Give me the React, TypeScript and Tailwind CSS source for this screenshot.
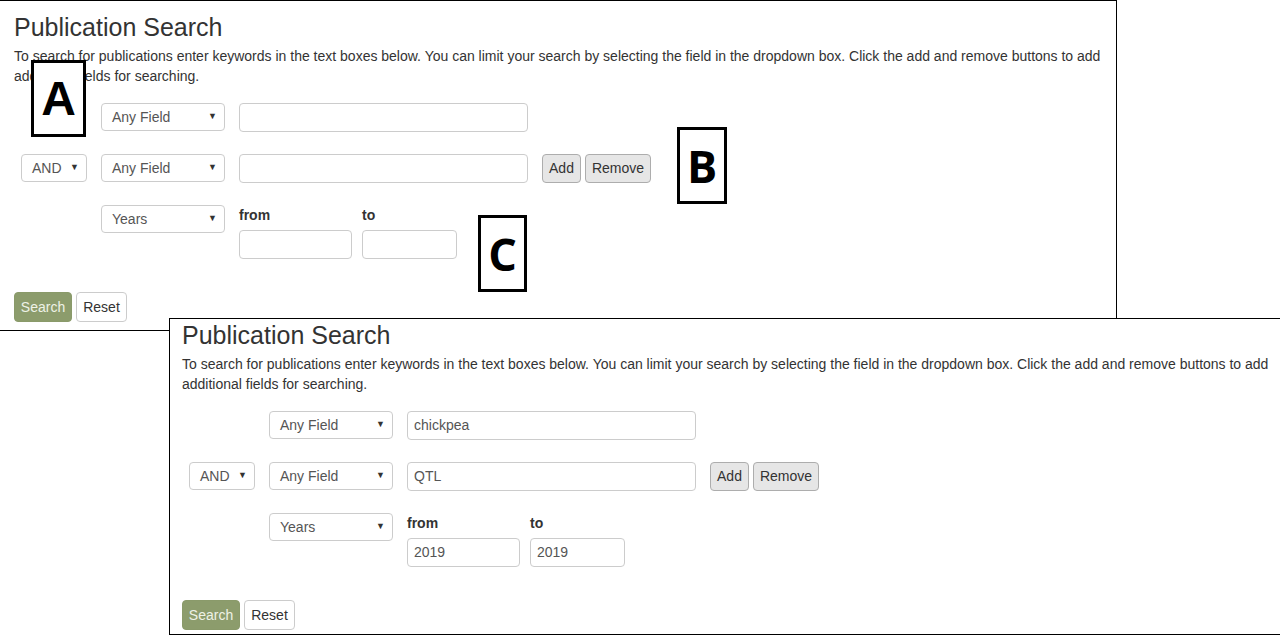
import React from 'react';

const font = { fontFamily: '"Liberation Sans", Arial, sans-serif' };

function Select({ label, className }: { label: string; className: string }) {
  return (
    <div className={`flex h-[28px] items-center justify-between rounded-[4px] border border-[#ccc] bg-white pl-[10px] pr-[7px] text-[14px] text-[#555] ${className}`}>
      <span>{label}</span>
      <span className="text-[9px] text-[#333]">▼</span>
    </div>
  );
}

function TextBox({ value, className }: { value?: string; className: string }) {
  return (
    <div className={`flex h-[29px] items-center rounded-[4px] border border-[#ccc] bg-white px-[6px] text-[14px] text-[#555] ${className}`}>
      {value}
    </div>
  );
}

function SearchForm({ term1, term2, from, to }: { term1?: string; term2?: string; from?: string; to?: string }) {
  return (
    <div className="w-[1088px] text-[#333]" style={font}>
      <h3 className="text-[25px] leading-[28px] font-normal">Publication Search</h3>
      <p className="mt-[5px] text-[14px] leading-5">
        To search for publications enter keywords in the text boxes below. You can limit your search by selecting the field in the dropdown box. Click the add and remove buttons to add additional fields for searching.
      </p>

      <div className="mt-[17px] flex items-start">
        <div className="w-[87px]" />
        <Select label="Any Field" className="w-[124px]" />
        <TextBox value={term1} className="ml-[14px] w-[289px]" />
      </div>

      <div className="mt-[22px] flex items-start">
        <div className="w-[87px] pl-[7px]">
          <Select label="AND" className="w-[66px]" />
        </div>
        <Select label="Any Field" className="w-[124px]" />
        <TextBox value={term2} className="ml-[14px] w-[289px]" />
        <button className="ml-[14px] h-[29px] w-[39px] rounded-[4px] border border-[#adadad] bg-[#e6e6e6] text-[14px] text-[#333]">Add</button>
        <button className="ml-[4px] h-[29px] w-[66px] rounded-[4px] border border-[#adadad] bg-[#e6e6e6] text-[14px] text-[#333]">Remove</button>
      </div>

      <div className="mt-[22px] flex items-start">
        <div className="w-[87px]" />
        <Select label="Years" className="w-[124px]" />
        <div className="ml-[14px] w-[123px]">
          <div className="h-[25px] text-[14px] font-bold leading-[20px]">from</div>
          <TextBox value={from} className="w-[113px]" />
        </div>
        <div>
          <div className="h-[25px] text-[14px] font-bold leading-[20px]">to</div>
          <TextBox value={to} className="w-[95px]" />
        </div>
      </div>

      <div className="mt-[33px] flex gap-[4px]">
        <button className="h-[30px] w-[58px] rounded-[4px] border border-[#8a9a6a] bg-[#8c9c6c] text-[14px] text-[#eef2e6]">Search</button>
        <button className="h-[30px] w-[51px] rounded-[4px] border border-[#ccc] bg-white text-[14px] text-[#333]">Reset</button>
      </div>
    </div>
  );
}

function Tag({ letter, className, letterClass }: { letter: string; className: string; letterClass: string }) {
  return (
    <div className={`absolute flex items-center justify-center border-[3px] border-black bg-white text-black ${className}`}>
      <span className={letterClass}>{letter}</span>
    </div>
  );
}

export default function App() {
  return (
    <div className="relative h-[636px] w-[1280px] overflow-hidden bg-white">
      <div className="box-border h-[331px] w-[1117px] border-t border-r border-b border-black pt-[12px] pl-[14px]">
        <SearchForm />
      </div>

      {/* annotation labels laid over the screenshots */}
      <Tag
        letter="A"
        className="left-[31px] top-[60px] h-[77px] w-[55px]"
        letterClass='text-[48px] font-bold leading-none [font-family:"Liberation_Sans",Arial,sans-serif]'
      />
      <Tag
        letter="B"
        className="left-[677px] top-[127px] h-[77px] w-[50px]"
        letterClass='text-[45px] font-bold leading-none [font-family:"Open_Sans",sans-serif]'
      />
      <Tag
        letter="C"
        className="left-[478px] top-[215px] h-[77px] w-[49px]"
        letterClass='text-[45px] font-bold leading-none [font-family:"Open_Sans",sans-serif]'
      />

      <div className="absolute left-[169px] top-[318px] box-border h-[317px] w-[1200px] border-t border-l border-b border-black bg-white pt-[2px] pl-[12px]">
        <SearchForm term1="chickpea" term2="QTL" from="2019" to="2019" />
      </div>
    </div>
  );
}
